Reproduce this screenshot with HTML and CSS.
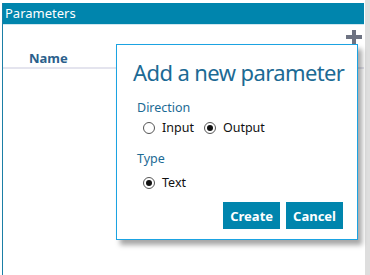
FILE: index.html
```html
<!DOCTYPE html>
<html>
<head>
<meta charset="utf-8">
<link rel="stylesheet" href="styles.css">
</head>
<body>
<div class="page">
  <div class="panel">
    <div class="panel-header">Parameters</div>
    <div class="panel-body">
      <div class="toolbar">
        <svg class="plus" width="16" height="16" viewBox="0 0 16 16"><rect x="6" y="0" width="4" height="16" fill="#6e7382"/><rect x="0" y="5" width="16" height="4" fill="#6e7382"/></svg>
      </div>
      <div class="table-head"><span class="col-name">Name</span></div>
    </div>
  </div>
  <div class="scrollbar"></div>
  <div class="dialog">
    <h1 class="dialog-title">Add a new parameter</h1>
    <div class="field-label">Direction</div>
    <div class="radio-row">
      <label class="radio"><span class="circle"></span>Input</label>
      <label class="radio"><span class="circle checked"></span>Output</label>
    </div>
    <div class="field-label type">Type</div>
    <div class="radio-row type-row">
      <label class="radio"><span class="circle checked"></span>Text</label>
    </div>
    <div class="actions">
      <button class="btn">Create</button>
      <button class="btn">Cancel</button>
    </div>
  </div>
</div>
</body>
</html>
```
FILE: styles.css
```css
html, body {
  margin: 0;
  padding: 0;
  background: #fff;
  font-family: "Noto Sans", "Open Sans", sans-serif;
}
.page {
  position: relative;
  width: 370px;
  height: 275px;
  display: flex;
  padding-top: 3px;
  box-sizing: border-box;
  overflow: hidden;
}
.panel {
  margin-left: 2px;
  width: 361px;
  border-left: 1px solid #1b7fa6;
  display: flex;
  flex-direction: column;
}
.panel-header {
  background: #0085ad;
  color: #fff;
  font-size: 13px;
  height: 21px;
  line-height: 20px;
  padding-left: 2px;
  border-bottom: 1px solid #cfe7f0;
}
.panel-body {
  flex: 1;
  background: #fff;
}
.toolbar {
  height: 19px;
  padding-top: 5px;
  display: flex;
  justify-content: flex-end;
  padding-right: 2px;
}
.plus {
  display: block;
}
.table-head {
  height: 18px;
  border-bottom: 2px solid #e4e4ee;
  padding-left: 26px;
  display: flex;
  align-items: center;
}
.col-name {
  font-weight: bold;
  color: #2b5f8c;
  font-size: 13px;
  line-height: 16px;
}
.scrollbar {
  margin-left: 1px;
  flex: 1;
  background: #dedede;
  margin-top: -3px;
}
.dialog {
  position: absolute;
  left: 116px;
  top: 44px;
  width: 242px;
  height: 196px;
  background: #fff;
  border: 1px solid #1ba3e2;
  box-shadow: 4px 5px 5px rgba(0, 0, 0, 0.35);
  padding: 0 16px;
  box-sizing: border-box;
}
.dialog-title {
  margin: 12px 0 0 0;
  font-weight: normal;
  font-size: 22px;
  letter-spacing: -0.6px;
  white-space: nowrap;
  color: #1c6a94;
  line-height: 30px;
}
.field-label {
  margin-top: 12px;
  font-size: 12.5px;
  line-height: 17px;
  color: #1c6a94;
  margin-left: 4px;
}
.field-label.type {
  margin-top: 14px;
}
.radio-row {
  display: flex;
  gap: 10px;
  margin-top: 3px;
  margin-left: 10px;
  height: 17px;
}
.radio-row.type-row {
  margin-top: 7px;
}
.radio {
  display: flex;
  align-items: center;
  font-size: 12.5px;
  line-height: 17px;
  color: #111;
  gap: 7px;
}
.circle {
  width: 10px;
  height: 10px;
  border: 1px solid #555;
  border-radius: 50%;
  box-sizing: content-box;
  position: relative;
  background: #fff;
}
.circle.checked::after {
  content: "";
  position: absolute;
  left: 2px;
  top: 2px;
  width: 6px;
  height: 6px;
  border-radius: 50%;
  background: #111;
}
.actions {
  display: flex;
  justify-content: flex-end;
  gap: 6px;
  margin-top: 11px;
  margin-right: -2px;
}
.btn {
  background: #0085ad;
  color: #fff;
  border: none;
  font-family: inherit;
  font-weight: bold;
  font-size: 13px;
  height: 27px;
  padding: 0 7px;
  margin: 0;
}
```
